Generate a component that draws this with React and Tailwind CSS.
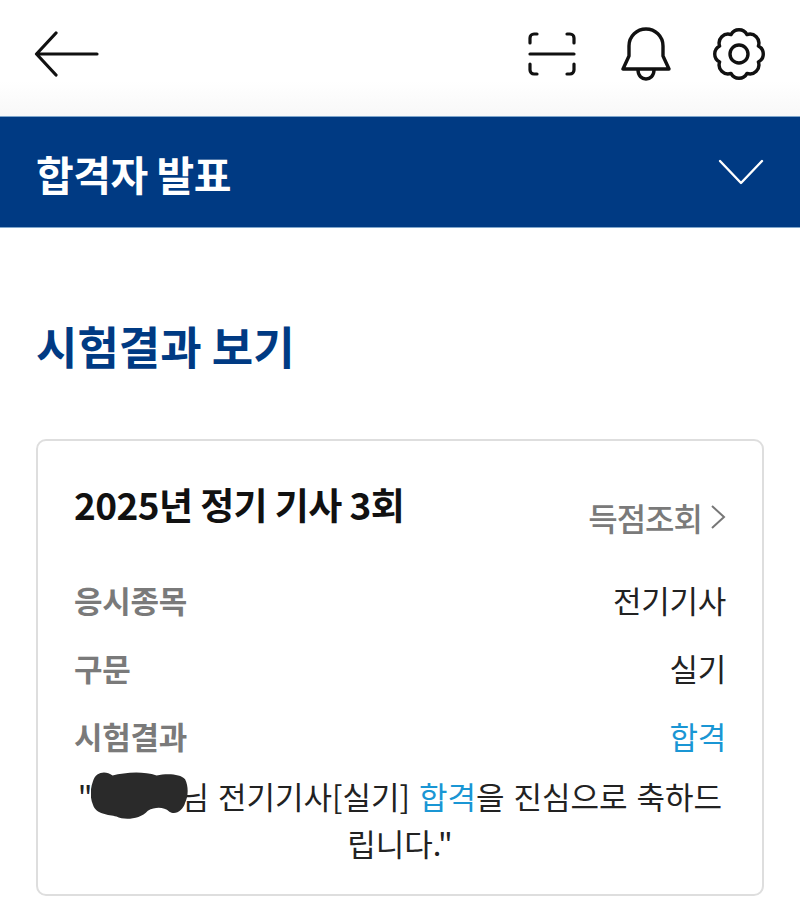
const font = { fontFamily: '"Noto Sans CJK KR", "Liberation Sans", sans-serif' };

function Row({ label, value, valueClass = "text-[#222]" }) {
  return (
    <div className="flex justify-between items-center h-[68px]">
      <span className="text-[31px] font-bold text-[#7a7a7a] tracking-[-0.25px]">{label}</span>
      <span className={`text-[31px] tracking-[-0.25px] ${valueClass}`}>{value}</span>
    </div>
  );
}

export default function App() {
  return (
    <div style={font} className="w-[800px] h-[907px] bg-white overflow-hidden">
      <header className="h-[116px] flex items-center justify-between pl-[34px] pr-[34px] bg-gradient-to-b from-white from-70% to-[#f8f8f8]">
        <svg width="66" height="46" viewBox="0 0 66 46" fill="none" stroke="#111" strokeWidth="3.2" strokeLinecap="round" strokeLinejoin="round" className="mb-[8px]">
          <path d="M2.5 23H63M22 2 2.5 23 22 44" />
        </svg>
        <div className="flex items-center gap-[42px] mb-[8px]">
          <svg width="50" height="46" viewBox="0 0 50 46" fill="none" stroke="#111" strokeWidth="3.2" strokeLinecap="round" className="mr-[3px]">
            <path d="M3 12V7a4 4 0 0 1 4-4h3M40 3h3a4 4 0 0 1 4 4v5M3 23h44M3 33v6a4 4 0 0 0 4 4h3M47 33v6a4 4 0 0 1-4 4h-3" />
          </svg>
          <svg width="50" height="54" viewBox="0 0 50 54" fill="none" stroke="#111" strokeWidth="3.4" strokeLinecap="round" strokeLinejoin="round" className="-mx-[1px]">
            <path d="M2 42h46l-6-13V19C42 9 34 2 25 2S8 9 8 19v10L2 42Z" />
            <path d="M17 43c0 6 4 9 8 9s8-3 8-9" />
          </svg>
          <svg width="54" height="54" viewBox="0 0 54 54" fill="none" stroke="#111" strokeWidth="3.4" strokeLinejoin="round" strokeLinecap="round">
            <path d="M35 7.6A9 9 0 0 1 46.4 19 9 9 0 0 1 46.4 35 9 9 0 0 1 35 46.4 9 9 0 0 1 19 46.4 9 9 0 0 1 7.6 35 9 9 0 0 1 7.6 19 9 9 0 0 1 19 7.6 9 9 0 0 1 35 7.6Z" />
            <circle cx="27" cy="27" r="9" />
          </svg>
        </div>
      </header>

      <div className="h-[112px] bg-[#003a83] flex items-center justify-between pl-[36px] pr-[36px] border-y border-[#7fa6cc]">
        <h2 className="text-[41px] font-bold text-white tracking-[-0.5px] leading-none mt-[2px]">합격자 발표</h2>
        <svg width="46" height="26" viewBox="0 0 46 26" fill="none" stroke="#fff" strokeWidth="2.4" strokeLinecap="round" strokeLinejoin="round">
          <path d="M2 2 23 24 44 2" />
        </svg>
      </div>

      <main className="px-[36px]">
        <h1 className="pt-[90px] text-[45px] font-bold text-[#003a83] leading-[56px] h-[211px]">시험결과 보기</h1>
        <section className="w-[728px] h-[457px] border-2 border-[#dedede] rounded-[10px] px-[36px] pt-[40px]">
          <div className="flex justify-between h-[85px]">
            <span className="text-[37px] font-bold text-[#111] leading-[46px] tracking-[-0.6px]">2025년 정기 기사 3회</span>
            <span className="flex items-center h-[72px] text-[32px] font-medium text-[#7a7a7a] tracking-[-1px]">
              득점조회
              <svg width="16" height="26" viewBox="0 0 16 26" fill="none" stroke="#777" strokeWidth="2" className="ml-[8px]">
                <path d="M2 2 14 13 2 24" />
              </svg>
            </span>
          </div>
          <Row label="응시종목" value="전기기사" />
          <Row label="구문" value="실기" />
          <Row label="시험결과" value="합격" valueClass="text-[#1a96d4]" />
          <div className="relative text-center text-[31px] leading-[47px] text-[#222] mt-[2px] [word-spacing:2px]">
            "<span className="inline-block w-[88px]" />님 전기기사[실기] <span className="text-[#1a96d4]">합격</span>을 진심으로 축하드립니다."
            <svg width="98" height="50" viewBox="0 0 100 50" className="absolute left-[17px] top-[-1px]" fill="#2a2a2a">
              <path d="M2 10C5 0 15-1 22 4c12-3 30-5 45 0 10-2 24-2 29 4 4 8 3 18 0 24-2 8-10 13-16 9-6-5-14-5-22-1-8 9-24 10-32 6C18 44 5 44 2 34c-3-7-3-16 0-24Z" />
            </svg>
          </div>
        </section>
      </main>
    </div>
  );
}
